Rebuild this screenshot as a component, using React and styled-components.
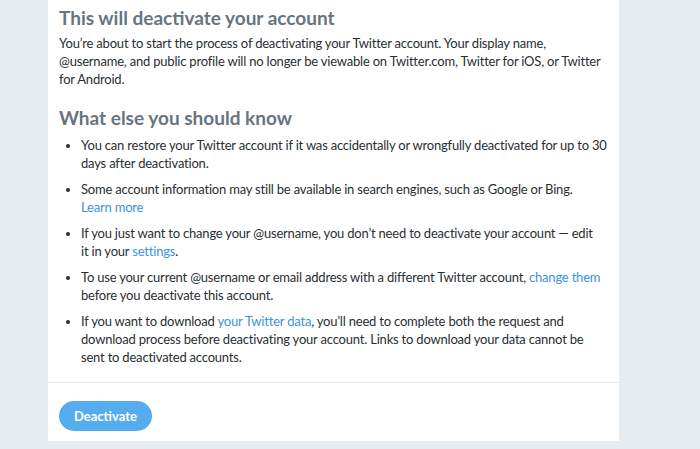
import styled, { createGlobalStyle } from "styled-components";

const GlobalStyle = createGlobalStyle`
  html, body {
    margin: 0;
    padding: 0;
    background: #e6ecf0;
  }
  body {
    font-family: Lato, "Open Sans", sans-serif;
    color: #292f33;
  }
`;

const Page = styled.div`
  width: 700px;
  height: 449px;
  overflow: hidden;
  padding-left: 48px;
  box-sizing: border-box;
`;

const Panel = styled.div`
  width: 571px;
  background: #fff;
  box-sizing: border-box;
`;

const Body = styled.div`
  padding: 6px 11px 16px 11px;
`;

const Title = styled.h2`
  margin: 0;
  font-size: 19px;
  line-height: 24px;
  font-weight: 700;
  color: #66757f;
`;

const Text = styled.p`
  margin: 4px 0 0 0;
  font-size: 13px;
  line-height: 18px;
  letter-spacing: -0.2px;
`;

const Section = styled.div`
  margin-top: ${(p) => p.gap || 0}px;
`;

const List = styled.ul`
  margin: 6px 0 0 0;
  padding: 0 0 0 22px;
  font-size: 13px;
  line-height: 18px;
  letter-spacing: -0.2px;
`;

const Item = styled.li`
  margin-bottom: 8px;
  &:last-child {
    margin-bottom: 0;
  }
`;

const Link = styled.a`
  color: #3b94d9;
  text-decoration: none;
`;

const Footer = styled.div`
  border-top: 1px solid #e6ecf0;
  padding: 18px 11px 10px 11px;
`;

const Button = styled.button`
  height: 30px;
  padding: 0 15px;
  border: none;
  border-radius: 100px;
  background: #55acee;
  color: #fff;
  font-family: Lato, "Open Sans", sans-serif;
  font-size: 13px;
  font-weight: 700;
  cursor: pointer;
`;

export default function App() {
  return (
    <>
      <GlobalStyle />
      <Page>
        <Panel>
          <Body>
            <Title>This will deactivate your account</Title>
            <Text>
              You’re about to start the process of deactivating your Twitter
              account. Your display name, @username, and public profile will no
              longer be viewable on Twitter.com, Twitter for iOS, or Twitter
              for Android.
            </Text>
            <Section gap={18}>
              <Title>What else you should know</Title>
              <List>
                <Item>
                  You can restore your Twitter account if it was accidentally or
                  wrongfully deactivated for up to 30 days after deactivation.
                </Item>
                <Item>
                  Some account information may still be available in search
                  engines, such as Google or Bing.{" "}
                  <Link href="#">Learn{"\u00a0"}more</Link>
                </Item>
                <Item>
                  If you just want to change your @username, you don’t need to
                  deactivate your account — edit it{"\u00a0"}in your{" "}
                  <Link href="#">settings</Link>.
                </Item>
                <Item>
                  To use your current @username or email address with a
                  different Twitter account, <Link href="#">change them</Link>{" "}
                  before you deactivate this account.
                </Item>
                <Item>
                  If you want to download <Link href="#">your Twitter data</Link>,
                  you’ll need to complete both the request and download process
                  before deactivating your account. Links to download your data
                  cannot be sent to deactivated accounts.
                </Item>
              </List>
            </Section>
          </Body>
          <Footer>
            <Button>Deactivate</Button>
          </Footer>
        </Panel>
      </Page>
    </>
  );
}
